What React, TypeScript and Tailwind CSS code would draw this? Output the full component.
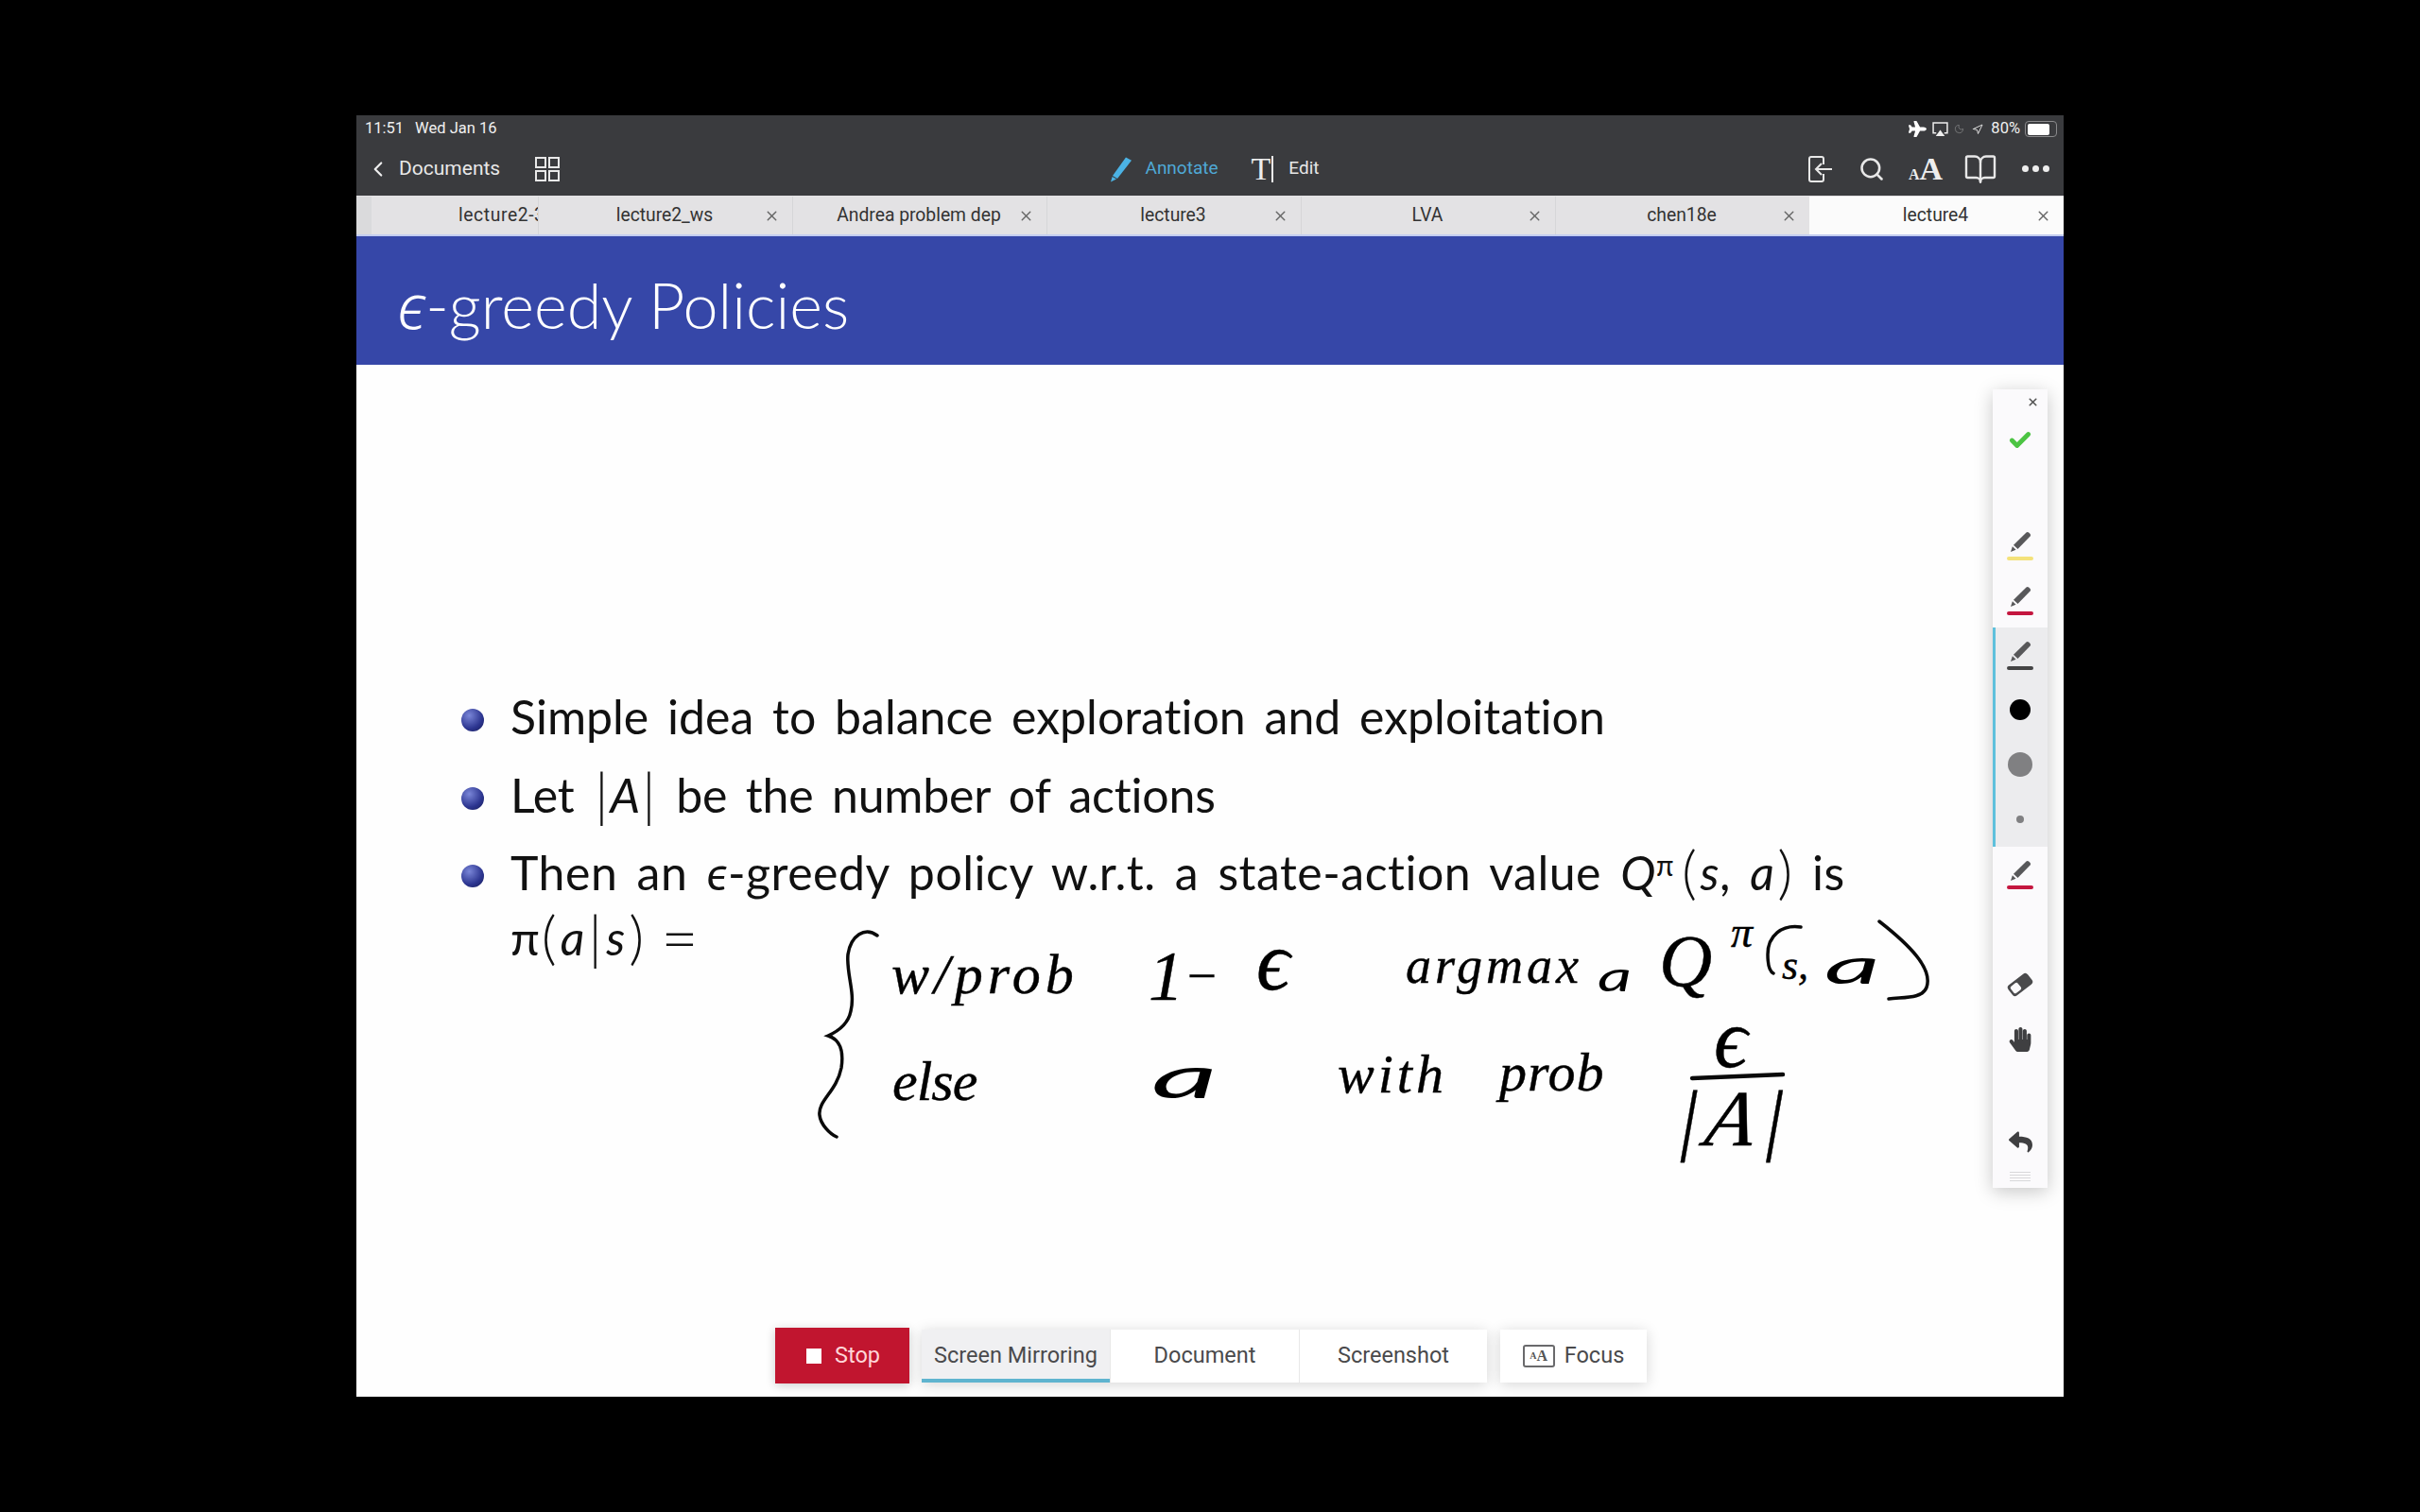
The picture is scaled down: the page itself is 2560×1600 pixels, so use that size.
import React from 'react'
import { BookOpen, Check, ChevronLeft, Moon, Navigation, Search, X } from 'lucide-react'
import { FaHandPaper, FaPlane, FaReply } from 'react-icons/fa'

const tabs = [
  { name: 'lecture2_ws' },
  { name: 'Andrea problem dep' },
  { name: 'lecture3' },
  { name: 'LVA' },
  { name: 'chen18e' },
]

const PenIcon: React.FC<{ line: string }> = ({ line }) => (
  <div className="flex flex-col items-center">
    <svg width="24" height="24" viewBox="0 0 24 24" className="text-[#58585a]" fill="currentColor">
      <path d="M18.5 1.5a2 2 0 0 1 2.6 0l1.5 1.5a2 2 0 0 1 0 2.6L9.5 19 5 14.7z" />
      <path d="M3.9 16.2l3.6 3.6L2 22z" />
    </svg>
    <div className={`mt-[3px] h-[4px] w-[28px] rounded-full ${line}`} />
  </div>
)

const Row: React.FC<{ children?: React.ReactNode }> = ({ children }) => (
  <div className="flex h-[58px] items-center justify-center">{children}</div>
)

const Bullet: React.FC = () => (
  <span className="absolute left-[-52px] top-[33px] h-[24px] w-[24px] rounded-full bg-[radial-gradient(circle_at_35%_30%,#7a86d8,#2c3590_60%,#161b55)]" />
)

// tall thin delimiter used in the slide's math
const Delim: React.FC<{ className?: string; children: React.ReactNode }> = ({ className, children }) => (
  <span className={`inline-block align-[-3px] text-[62px] font-light leading-none ${className ?? ''}`}>{children}</span>
)

const Palette: React.FC = () => (
  <div className="absolute left-[1731px] top-[290px] flex h-[845px] w-[58px] flex-col bg-[#fbfafc] shadow-[0_4px_18px_rgba(0,0,0,0.22)]">
    <div className="flex h-[25px] items-center justify-end pr-[9px] pt-[2px]">
      <X size={13} strokeWidth={3} className="text-[#555]" />
    </div>
    <Row>
      <Check size={26} strokeWidth={4.5} className="text-[#4cc443]" />
    </Row>
    <div className="h-[53px]" />
    <Row><PenIcon line="bg-[#f4e27a]" /></Row>
    <Row><PenIcon line="bg-[#c4163f]" /></Row>
    <div className="border-l-[3px] border-[#5fc0dc] bg-[#ececee] pr-[3px]">
      <Row><PenIcon line="bg-[#444]" /></Row>
      <Row><div className="h-[22px] w-[22px] rounded-full bg-black" /></Row>
      <Row><div className="h-[26px] w-[26px] rounded-full bg-[#808082]" /></Row>
      <Row><div className="h-[8px] w-[8px] rounded-full bg-[#808082]" /></Row>
    </div>
    <Row><PenIcon line="bg-[#c4163f]" /></Row>
    <div className="h-[59px]" />
    <Row>
      <svg width="30" height="30" viewBox="0 0 30 30">
        <g transform="rotate(-38 15 15)">
          <rect x="2" y="8" width="26" height="14" rx="3.5" fill="#4a4a4c" />
          <rect x="4.5" y="10.5" width="9.5" height="9" rx="2" fill="#fbfafc" />
        </g>
      </svg>
    </Row>
    <Row>
      <FaHandPaper size={26} className="text-[#3f3f41]" />
    </Row>
    <div className="h-[50px]" />
    <Row>
      <FaReply size={25} className="text-[#3f3f41]" />
    </Row>
    <div className="mx-auto mt-[3px] flex w-[22px] flex-col gap-[2px]">
      <div className="h-[1px] bg-[#d8d8da]" />
      <div className="h-[1px] bg-[#d8d8da]" />
      <div className="h-[1px] bg-[#d8d8da]" />
      <div className="h-[1px] bg-[#d8d8da]" />
    </div>
  </div>
)

const BottomBar: React.FC = () => (
  <div className="absolute bottom-[14px] left-[443px] flex items-center font-['Roboto',sans-serif] text-[23.5px] text-[#4a4a4c]">
    <button className="flex h-[59px] w-[142px] items-center justify-center gap-[14px] bg-[#c1152f] pl-[2px] text-[#ffd5d8] shadow-[0_2px_10px_rgba(0,0,0,0.2)]">
      <span className="h-[16px] w-[16px] bg-white" />
      <span>Stop</span>
    </button>
    <div className="ml-[13px] flex h-[56px] w-[598px] bg-white shadow-[0_2px_14px_rgba(0,0,0,0.16)]">
      <div className="flex w-[199px] items-center justify-center border-b-[4px] border-[#5fb4cf] bg-[#f0f0f2] pt-[4px]">Screen Mirroring</div>
      <div className="flex w-[200px] items-center justify-center border-l border-[#e8e8e8]">Document</div>
      <div className="flex w-[199px] items-center justify-center border-l border-[#e8e8e8]">Screenshot</div>
    </div>
    <div className="ml-[14px] flex h-[56px] w-[155px] items-center justify-center gap-[10px] bg-white shadow-[0_2px_14px_rgba(0,0,0,0.16)]">
      <span className="flex h-[24px] w-[34px] items-center justify-center rounded-[3px] border-2 border-[#6a6a6c] font-['Liberation_Serif',serif] font-bold leading-none text-[#555]">
        <span className="text-[10px]">A</span><span className="text-[16px]">A</span>
      </span>
      <span>Focus</span>
    </div>
  </div>
)

const Ink: React.FC<{ className: string; children: React.ReactNode }> = ({ className, children }) => (
  <span className={`absolute whitespace-nowrap font-['Liberation_Serif',serif] italic leading-none text-black [-webkit-text-stroke:0.4px_black] ${className}`}>
    {children}
  </span>
)

// the flat, wide handwritten "a"
const InkWide: React.FC<{ className: string; children: React.ReactNode }> = ({ className, children }) => (
  <span className={`absolute origin-left whitespace-nowrap font-['Lato',sans-serif] font-normal italic leading-none text-black ${className}`}>
    {children}
  </span>
)

// pen annotation on the slide, placed where it was written
const Annotation: React.FC = () => (
  <div className="pointer-events-none absolute inset-0">
    <svg width="1806" height="1356" viewBox="377 122 1806 1356" className="absolute inset-0" fill="none" stroke="#0a0a0a" strokeWidth="3.5" strokeLinecap="round">
      <path d="M928 990 C915 980 900 990 897 1010 C895 1030 905 1050 900 1070 C897 1085 885 1092 876 1096 C888 1100 893 1110 890 1130 C885 1155 865 1165 867 1180 C868 1190 878 1200 885 1203" />
      <path d="M1988 975 C2020 1000 2045 1025 2038 1045 C2033 1057 2015 1055 1998 1057" />
      <path d="M1905 981 C1885 978 1870 990 1870 1010 C1870 1020 1872 1028 1876 1030" />
      <path d="M1790 1141 L1886 1137" strokeWidth="4.5" />
    </svg>
    <Ink className="left-[566px] top-[879px] text-[60px] tracking-[5px]">w/prob</Ink>
    <Ink className="left-[838px] top-[874px] text-[74px]">1</Ink>
    <Ink className="left-[882px] top-[881px] text-[50px]">–</Ink>
    <Ink className="left-[952px] top-[852px] text-[88px]">ϵ</Ink>
    <Ink className="left-[1110px] top-[873px] text-[54px] tracking-[4px]">argmax</Ink>
    <InkWide className="left-[1313px] top-[888px] scale-x-[1.6] text-[44px]">a</InkWide>
    <Ink className="left-[1378px] top-[856px] text-[78px]">Q</Ink>
    <Ink className="left-[1454px] top-[842px] text-[46px]">π</Ink>
    <Ink className="left-[1508px] top-[878px] text-[44px]">s,</Ink>
    <InkWide className="left-[1553px] top-[873px] scale-x-[2.2] text-[52px]">a</InkWide>
    <Ink className="left-[567px] top-[992px] text-[60px] tracking-[-1px]">else</Ink>
    <InkWide className="left-[841px] top-[985px] scale-x-[2.2] text-[62px]">a</InkWide>
    <Ink className="left-[1038px] top-[986px] text-[58px] tracking-[4px]">with</Ink>
    <Ink className="left-[1209px] top-[984px] text-[58px] tracking-[1px]">prob</Ink>
    <Ink className="left-[1436px] top-[934px] text-[88px]">ϵ</Ink>
    <Ink className="left-[1398px] top-[1020px] -skew-x-[10deg] text-[84px] tracking-[8px]">|A|</Ink>
  </div>
)

export default function App() {
  return (
    <div className="h-screen w-full overflow-hidden bg-black pl-[377px] pt-[122px]">
      <div className="relative flex h-[1356px] w-[1806px] flex-col overflow-hidden bg-[#fefefe]">
        {/* status bar */}
        <div className="flex h-[28px] items-center justify-between bg-[#3a3b3e] pl-[9px] pr-[7px] pt-[1px] font-['Roboto',sans-serif] text-[16.5px] text-[#f0f0f0]">
          <div className="flex gap-[12px]">
            <span>11:51</span>
            <span>Wed Jan 16</span>
          </div>
          <div className="flex items-center">
            <FaPlane size={19} className="text-white" />
            <svg width="17" height="16" viewBox="0 0 16 15" className="ml-[6px]" fill="none" stroke="#eee" strokeWidth="1.4">
              <path d="M4 11H1V1h14v10h-3" />
              <path d="M8 8l4.5 6h-9z" fill="#eee" stroke="none" />
            </svg>
            <Moon size={11} className="ml-[6px] text-[#77787a]" />
            <Navigation size={12} className="ml-[8px] text-[#ddd]" />
            <span className="ml-[8px]">80%</span>
            <span className="ml-[5px] flex h-[17px] w-[34px] items-center rounded-[4px] border border-[#8a8a8c] p-[1.5px]">
              <span className="h-full w-[80%] rounded-[2px] bg-white" />
            </span>
          </div>
        </div>

        {/* toolbar */}
        <div className="grid h-[57px] grid-cols-[1fr_auto_1fr] items-center bg-[#3a3b3e] font-['Roboto',sans-serif] text-[#e8e8e8]">
          <div className="flex items-center pl-[10px]">
            <ChevronLeft size={26} strokeWidth={2} className="text-[#eee]" />
            <span className="ml-[9px] text-[21px]">Documents</span>
            <svg width="26" height="26" viewBox="0 0 26 26" className="ml-[37px]" fill="none" stroke="#e8e8e8" strokeWidth="2">
              <rect x="1" y="1" width="10" height="10" />
              <rect x="15" y="1" width="10" height="10" />
              <rect x="1" y="15" width="10" height="10" />
              <rect x="15" y="15" width="10" height="10" />
            </svg>
          </div>
          <div className="flex items-center pl-[8px]">
            <svg width="26" height="28" viewBox="0 0 26 28" fill="#4bb2e4">
              <path d="M19 1.5l6 3.2L10 24l-5-3z" />
              <path d="M4.6 22l4.4 2.6L3 27.5z" />
            </svg>
            <span className="ml-[13px] text-[19px] text-[#4fa9d6]">Annotate</span>
            <span className="ml-[35px] font-['Liberation_Serif',serif] text-[34px] leading-none text-[#eee]">T</span>
            <div className="ml-[1px] h-[28px] w-[2px] bg-[#eee]" />
            <span className="ml-[16px] text-[19px]">Edit</span>
          </div>
          <div className="flex items-center justify-end pr-[15px]">
            <svg width="26" height="28" viewBox="0 0 26 28" fill="none" stroke="#e8e8e8" strokeWidth="2">
              <path d="M16 9V3a2 2 0 0 0-2-2H3a2 2 0 0 0-2 2v22a2 2 0 0 0 2 2h11a2 2 0 0 0 2-2v-6" />
              <path d="M25 14H9M14 8l-6 6 6 6" />
            </svg>
            <Search size={28} strokeWidth={2.2} className="ml-[27px]" />
            <span className="ml-[25px] flex items-baseline font-['Liberation_Serif',serif] font-bold leading-none text-[#eee]">
              <span className="text-[16px]">A</span>
              <span className="text-[34px]">A</span>
            </span>
            <BookOpen size={36} strokeWidth={1.6} className="ml-[22px]" />
            <div className="ml-[26px] flex gap-[4px]">
              <div className="h-[7px] w-[7px] rounded-full bg-[#eee]" />
              <div className="h-[7px] w-[7px] rounded-full bg-[#eee]" />
              <div className="h-[7px] w-[7px] rounded-full bg-[#eee]" />
            </div>
          </div>
        </div>

        {/* document tabs */}
        <div className="flex h-[43px] border-b-2 border-[#c3cdf0] bg-[#e3e2e4] pt-[1px] font-['Roboto',sans-serif] text-[19.3px] text-[#333]">
          <div className="relative flex w-[192px] items-center justify-end overflow-hidden border-l-[16px] border-[#dadadc]">
            <span className="absolute left-[92px] whitespace-nowrap tracking-[0.6px]">lecture2-3</span>
          </div>
          {tabs.map((tab) => (
            <div key={tab.name} className="relative flex w-[269px] items-center justify-center border-l border-[#d6d6d8] pr-[2px]">
              <span className="whitespace-nowrap">{tab.name}</span>
              <X size={17} strokeWidth={2} className="absolute right-[13px] text-[#666]" />
            </div>
          ))}
          <div className="relative flex w-[269px] items-center justify-center bg-[#fbfbfb] pr-[2px]">
            <span>lecture4</span>
            <X size={17} strokeWidth={2} className="absolute right-[13px] text-[#666]" />
          </div>
        </div>

        {/* slide header */}
        <div className="flex h-[136px] items-center bg-[#3647a8] pl-[43px] pt-[9px] font-['Lato',sans-serif] text-[66.5px] font-light text-white">
          <span className="font-['Noto_Sans',sans-serif] font-light italic">ϵ</span>
          <span>-greedy Policies</span>
        </div>

        {/* slide body */}
        <div className="flex flex-col pl-[163px] pt-[331px] font-['Lato',sans-serif] text-[50px] leading-[82.5px] text-[#111] [font-variant-ligatures:none] [word-spacing:7px]">
          <div className="relative">
            <Bullet />
            Simple idea to balance exploration and exploitation
          </div>
          <div className="relative tracking-[-0.2px]">
            <Bullet />
            Let <Delim className="mx-[2px]">|</Delim><i>A</i><Delim className="mx-[2px]">|</Delim> be the number of actions
          </div>
          <div className="relative tracking-[0.5px]">
            <Bullet />
            Then an <i>ϵ</i>-greedy policy w.r.t. a state-action value <i>Q</i><sup className="text-[30px]">π</sup>
            <Delim className="ml-[8px]">(</Delim><i className="ml-[3px]">s</i>, <i>a</i><Delim className="ml-[3px]">)</Delim> is
          </div>
          <div className="-mt-[14px]">
            π<Delim className="ml-[2px]">(</Delim><i className="ml-[4px]">a</i><Delim className="mx-[4px]">|</Delim><i>s</i><Delim className="ml-[4px]">)</Delim>
            <Delim className="ml-[18px] align-[-7px] text-[68px]">=</Delim>
          </div>
        </div>

        <Annotation />
        <Palette />
        <BottomBar />
      </div>
    </div>
  )
}
